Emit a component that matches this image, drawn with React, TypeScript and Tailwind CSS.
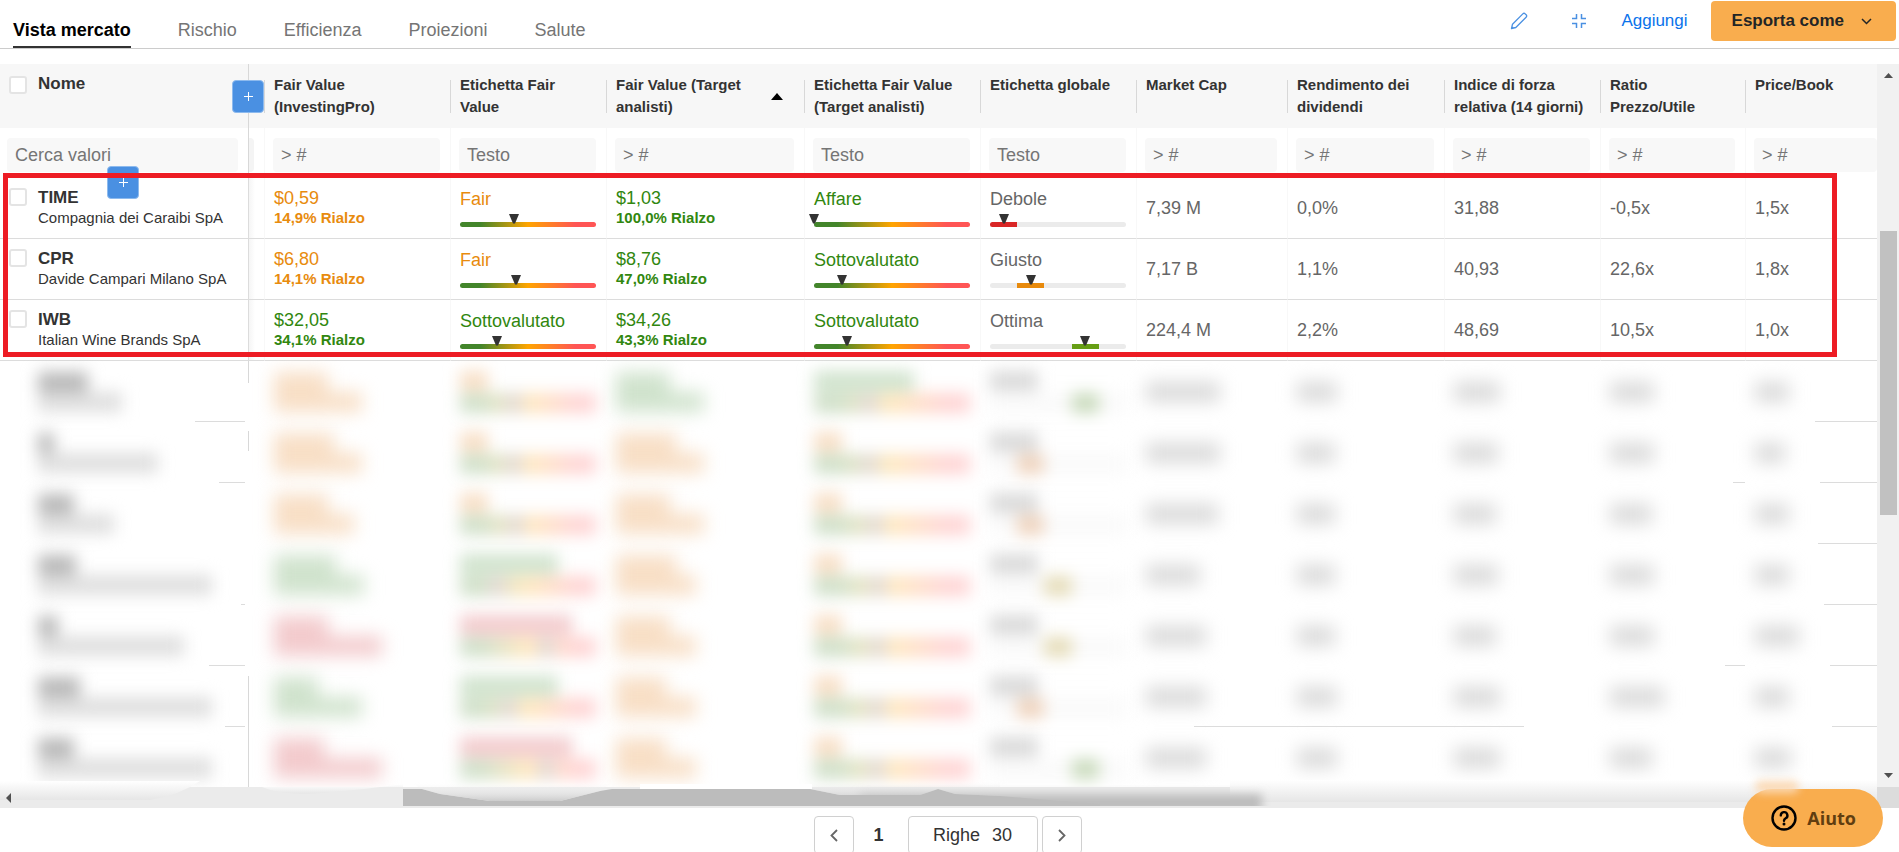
import React from 'react'

type Tone = 'orange' | 'green' | 'red' | 'gray'

interface Company {
  ticker: string
  name: string
  fairValue: [string, string, Tone]
  fairLabel: [string, Tone, number]
  target: [string, string, Tone]
  targetLabel: [string, Tone, number]
  health: [string, number]
  metrics: string[]
}

interface HiddenRow {
  name: [number, number]
  fairValue: [number, number, Tone]
  fairLabel: [number, Tone, number]
  target: [number, number, Tone]
  targetLabel: [number, Tone, number]
  health: number
  metrics: number[]
  nameRule: string
  metricRules: string[]
  edge: string
}

const TABS = ['Vista mercato', 'Rischio', 'Efficienza', 'Proiezioni', 'Salute']

const COLUMNS = [
  { title: 'Fair Value (InvestingPro)', placeholder: '> #', width: 'w-[186px]' },
  { title: 'Etichetta Fair Value', placeholder: 'Testo', width: 'w-[156px]' },
  { title: 'Fair Value (Target analisti)', placeholder: '> #', width: 'w-[198px]', sorted: true },
  { title: 'Etichetta Fair Value (Target analisti)', placeholder: 'Testo', width: 'w-[176px]' },
  { title: 'Etichetta globale', placeholder: 'Testo', width: 'w-[156px]' },
  { title: 'Market Cap', placeholder: '> #', width: 'w-[151px]' },
  { title: 'Rendimento dei dividendi', placeholder: '> #', width: 'w-[157px]' },
  { title: 'Indice di forza relativa (14 giorni)', placeholder: '> #', width: 'w-[156px]' },
  { title: 'Ratio Prezzo/Utile', placeholder: '> #', width: 'w-[145px]' },
  { title: 'Price/Book', placeholder: '> #', width: 'w-auto' },
]

const COMPANIES: Company[] = [
  {
    ticker: 'TIME',
    name: 'Compagnia dei Caraibi SpA',
    fairValue: ['$0,59', '14,9% Rialzo', 'orange'],
    fairLabel: ['Fair', 'orange', 40],
    target: ['$1,03', '100,0% Rialzo', 'green'],
    targetLabel: ['Affare', 'green', 0],
    health: ['Debole', 0],
    metrics: ['7,39 M', '0,0%', '31,88', '-0,5x', '1,5x'],
  },
  {
    ticker: 'CPR',
    name: 'Davide Campari Milano SpA',
    fairValue: ['$6,80', '14,1% Rialzo', 'orange'],
    fairLabel: ['Fair', 'orange', 41],
    target: ['$8,76', '47,0% Rialzo', 'green'],
    targetLabel: ['Sottovalutato', 'green', 18],
    health: ['Giusto', 1],
    metrics: ['7,17 B', '1,1%', '40,93', '22,6x', '1,8x'],
  },
  {
    ticker: 'IWB',
    name: 'Italian Wine Brands SpA',
    fairValue: ['$32,05', '34,1% Rialzo', 'green'],
    fairLabel: ['Sottovalutato', 'green', 27],
    target: ['$34,26', '43,3% Rialzo', 'green'],
    targetLabel: ['Sottovalutato', 'green', 21],
    health: ['Ottima', 3],
    metrics: ['224,4 M', '2,2%', '48,69', '10,5x', '1,0x'],
  },
]

const HIDDEN_ROWS: HiddenRow[] = [
  {
    name: [50, 84], fairValue: [54, 88, 'orange'], fairLabel: [28, 'orange', 40],
    target: [54, 88, 'green'], targetLabel: [100, 'green', 36], health: 3,
    metrics: [74, 40, 46, 44, 34], nameRule: 'w-[50px]',
    metricRules: ['', '', '', '', 'w-[62px]'], edge: 'top-0 h-[22px]',
  },
  {
    name: [16, 120], fairValue: [60, 88, 'orange'], fairLabel: [28, 'orange', 40],
    target: [60, 88, 'orange'], targetLabel: [28, 'orange', 36], health: 1,
    metrics: [74, 38, 44, 44, 30], nameRule: 'w-[26px]',
    metricRules: ['', '', '', 'w-3', 'w-[57px]'], edge: 'top-[9px] h-5',
  },
  {
    name: [36, 76], fairValue: [54, 80, 'orange'], fairLabel: [28, 'orange', 41],
    target: [54, 88, 'orange'], targetLabel: [28, 'orange', 40], health: 1,
    metrics: [72, 38, 42, 42, 34], nameRule: '',
    metricRules: ['', '', '', '', 'w-[59px]'], edge: '',
  },
  {
    name: [38, 174], fairValue: [62, 90, 'green'], fairLabel: [98, 'green', 27],
    target: [60, 80, 'orange'], targetLabel: [28, 'orange', 42], health: 2,
    metrics: [54, 38, 44, 44, 34], nameRule: 'w-1',
    metricRules: ['', '', '', '', 'w-[53px]'], edge: '',
  },
  {
    name: [20, 146], fairValue: [54, 108, 'red'], fairLabel: [112, 'red', 63],
    target: [54, 80, 'orange'], targetLabel: [28, 'orange', 42], health: 2,
    metrics: [60, 38, 42, 44, 44], nameRule: 'w-9',
    metricRules: ['', '', '', 'w-5', 'w-[47px]'], edge: '',
  },
  {
    name: [42, 174], fairValue: [44, 88, 'green'], fairLabel: [98, 'green', 36],
    target: [50, 80, 'orange'], targetLabel: [28, 'orange', 41], health: 1,
    metrics: [60, 40, 46, 54, 34], nameRule: 'w-5',
    metricRules: ['w-[93px]', 'w-full', 'w-20 right-[76px]', '', 'w-[45px]'], edge: 'bottom-0 h-[51px]',
  },
  {
    name: [36, 174], fairValue: [50, 108, 'red'], fairLabel: [112, 'red', 63],
    target: [50, 80, 'orange'], targetLabel: [28, 'orange', 41], health: 3,
    metrics: [60, 40, 46, 42, 36], nameRule: '',
    metricRules: ['', '', '', '', ''], edge: 'top-0 h-[61px]',
  },
]

const TEXT_TONES: Record<Tone, string> = {
  orange: 'text-[#e88b0e]',
  green: 'text-[#31870f]',
  red: 'text-[#d92626]',
  gray: 'text-[#666666]',
}

const SMUDGE_TONES: Record<Tone, string> = {
  orange: 'bg-[#f8dfc6]',
  green: 'bg-[#d0e3cd]',
  red: 'bg-[#f3cbcd]',
  gray: 'bg-[#dadada]',
}

const HEALTH_COLORS = ['bg-[#d92626]', 'bg-[#e88a0c]', 'bg-[#b9a52a]', 'bg-[#669e14]']

const HEALTH_SMUDGES = ['bg-[#f3cbcd]', 'bg-[#efd3bd]', 'bg-[#e5dcb8]', 'bg-[#c8dabb]']

const SCALE = 'bg-[linear-gradient(90deg,#43852b_15%,#ffa500_50%,#ff5555_85%)]'

const Marker = ({ at }: { at: number }) => (
  <svg
    className="absolute top-0 h-[10px] w-[10px] -translate-x-1/2"
    style={{ left: `${at}%` }}
    viewBox="0 0 10 10"
  >
    <path d="M0 0h10L6 9.500H4z" fill="#333" />
  </svg>
)

const Gauge = ({ at }: { at: number }) => (
  <div className="relative flex h-[13px] items-end">
    <div className={`h-[5px] w-full rounded-sm ${SCALE}`} />
    <Marker at={at} />
  </div>
)

const HealthGauge = ({ level }: { level: number }) => (
  <div className="relative flex h-[13px] items-end">
    <div className="h-[5px] w-full overflow-hidden rounded-sm bg-[#ebebeb]">
      <div className={`h-full w-1/5 ${HEALTH_COLORS[level]}`} style={{ marginLeft: `${level * 20}%` }} />
    </div>
    <Marker at={level * 20 + 10} />
  </div>
)

const Cell = ({ children }: { children: React.ReactNode }) => (
  <td className="h-[61px] border-b border-l border-b-[#dcdcdc] border-l-[#f8f8f8] py-0 pr-[10px] pl-[9px] align-middle">
    {children}
  </td>
)

const PriceCell = ({ value }: { value: [string, string, Tone] }) => (
  <Cell>
    <div className={TEXT_TONES[value[2]]}>
      <div className="leading-5">{value[0]}</div>
      <div className="text-[15px] leading-5 font-bold">{value[1]}</div>
    </div>
  </Cell>
)

const LabelCell = ({ label, tone, children }: { label: string; tone: Tone; children: React.ReactNode }) => (
  <Cell>
    <div className={`mb-[5px] leading-5 ${TEXT_TONES[tone]}`}>{label}</div>
    {children}
  </Cell>
)

const Smudge = ({ width, color }: { width: number; color: string }) => (
  <div className={`h-5 ${color}`} style={{ width }} />
)

const HiddenPrice = ({ value }: { value: [number, number, Tone] }) => (
  <td className="px-[10px] py-0">
    <div className="blur-[9px]">
      <Smudge width={value[0]} color={SMUDGE_TONES[value[2]]} />
      <Smudge width={value[1]} color={SMUDGE_TONES[value[2]]} />
    </div>
  </td>
)

const HiddenLabel = ({ value }: { value: [number, Tone, number] }) => (
  <td className="px-[10px] py-0">
    <div className="flex flex-col gap-[2px] blur-[8px]">
      <Smudge width={value[0]} color={SMUDGE_TONES[value[1]]} />
      <div className={`h-5 opacity-25 ${SCALE}`}>
        <div className="h-full w-4 bg-[#8a6a50]" style={{ marginLeft: `${value[2] - 6}%` }} />
      </div>
    </div>
  </td>
)

const AddButton = () => (
  <button
    aria-label="Aggiungi"
    className="flex h-[33px] w-8 items-center justify-center rounded-sm border border-[#8dbaee] bg-[#4a90e2]"
  >
    <svg className="h-[9px] w-[9px]" viewBox="0 0 9 9" stroke="#fff">
      <path d="M4.500 0v9M0 4.500h9" />
    </svg>
  </button>
)

const Checkbox = ({ label }: { label: string }) => (
  <input
    type="checkbox"
    aria-label={label}
    className="h-[18px] w-[18px] shrink-0 appearance-none rounded-[3px] border-2 border-[#e4e4e4] bg-white"
  />
)

const Toolbar = () => (
  <header className="flex h-[49px] items-end justify-between border-b border-[#cccccc]">
    <nav className="flex gap-[47px] pl-[13px]">
      {TABS.map((tab, index) => (
        <a
          key={tab}
          href="#"
          className={`border-b-2 pb-[6px] leading-5 ${
            index === 0 ? 'border-[#333333] font-bold text-black' : 'border-transparent text-[#757575]'
          }`}
        >
          {tab}
        </a>
      ))}
    </nav>
    <div className="mb-[7px] flex items-center pr-[3px] text-[17px]">
      <button aria-label="Modifica" className="mr-[43px]">
        <svg className="h-[18px] w-[18px]" viewBox="0 0 18 18" fill="none" stroke="#4a90e2" strokeWidth="1.300">
          <path
            d="M1.500 16.500l1-4.300L12.800 1.900a1.700 1.700 0 0 1 2.400 0l.9.9a1.700 1.700 0 0 1 0 2.400L5.800 15.500zM1.900 14.500l1.600 1.600"
            strokeLinejoin="round"
          />
        </svg>
      </button>
      <button aria-label="Comprimi" className="mr-[34px]">
        <svg className="h-4 w-4" viewBox="0 0 16 16" fill="none" stroke="#4a90e2" strokeWidth="1.500">
          <path d="M5.500 1v4.500H1M10.500 1v4.500H15M5.500 15v-4.500H1M10.500 15v-4.500H15" />
        </svg>
      </button>
      <button className="mr-[23px] text-[#0a73eb]">Aggiungi</button>
      <button className="flex h-10 items-center gap-[17px] rounded-sm bg-[#f9ad4e] pr-6 pl-[21px] font-bold text-[#232526]">
        Esporta come
        <svg className="h-[7px] w-[11px]" viewBox="0 0 11 7" fill="none" stroke="#232526" strokeWidth="1.500">
          <path d="M1 1l4.500 4.500L10 1" />
        </svg>
      </button>
    </div>
  </header>
)

const TableHead = () => (
  <thead>
    <tr className="h-16 bg-[#f7f7f7] text-left">
      <th className="relative border-r border-[#d8d8d8] p-0">
        <div className="flex h-10 items-start gap-[11px] pl-[9px]">
          <Checkbox label="Seleziona tutto" />
          <span className="text-[17px] leading-4">Nome</span>
        </div>
        <div className="absolute top-4 -right-4 z-10">
          <AddButton />
        </div>
      </th>
      <th className="p-0" />
      {COLUMNS.map((column) => (
        <th key={column.title} className="p-0">
          <div className="flex items-center">
            <span className="h-[33px] w-px bg-[#d8d8d8]" />
            <div className="h-11 flex-1 pr-3 pl-[9px] text-[15px] leading-[22px]">{column.title}</div>
            {column.sorted && (
              <svg className="mr-[21px] h-[7px] w-3" viewBox="0 0 12 7">
                <path d="M0 7l6-7 6 7z" />
              </svg>
            )}
          </div>
        </th>
      ))}
    </tr>
    <tr className="h-[50px] align-bottom">
      <td className="relative border-r border-[#d8d8d8] pt-0 pr-[10px] pb-[6px] pl-[7px]">
        <input
          aria-label="Cerca valori"
          placeholder="Cerca valori"
          className="block h-[34px] w-full rounded bg-[#f8f8f8] px-2 placeholder:text-[#757575]"
        />
        <div className="absolute top-[38px] left-[107px] z-10">
          <AddButton />
        </div>
      </td>
      <td className="px-0 pt-0 pb-[6px]">
        <div className="h-[34px] w-[5px] rounded-r bg-[#f4f4f4]" />
      </td>
      {COLUMNS.map((column, index) => (
        <td
          key={column.title}
          className={`border-l border-[#f8f8f8] pt-0 pb-[6px] pl-2 ${
            index === COLUMNS.length - 1 ? 'pr-0' : 'pr-[10px]'
          }`}
        >
          <input
            aria-label={column.title}
            placeholder={column.placeholder}
            className="block h-[34px] w-full rounded bg-[#f8f8f8] px-2 placeholder:text-[#757575]"
          />
        </td>
      ))}
    </tr>
  </thead>
)

const CompanyRow = ({ company }: { company: Company }) => (
  <tr>
    <td className="h-[61px] border-r border-b border-[#dcdcdc] p-0">
      <div className="flex gap-[11px] pl-[9px]">
        <Checkbox label={company.ticker} />
        <div className="text-[#333333]">
          <div className="text-[17px] leading-5 font-bold">{company.ticker}</div>
          <div className="text-[15px] leading-5">{company.name}</div>
        </div>
      </div>
    </td>
    <td className="border-b border-[#dcdcdc] bg-linear-to-r from-[#f5f5f5] to-white to-40% p-0" />
    <PriceCell value={company.fairValue} />
    <LabelCell label={company.fairLabel[0]} tone={company.fairLabel[1]}>
      <Gauge at={company.fairLabel[2]} />
    </LabelCell>
    <PriceCell value={company.target} />
    <LabelCell label={company.targetLabel[0]} tone={company.targetLabel[1]}>
      <Gauge at={company.targetLabel[2]} />
    </LabelCell>
    <LabelCell label={company.health[0]} tone="gray">
      <HealthGauge level={company.health[1]} />
    </LabelCell>
    {company.metrics.map((metric, index) => (
      <Cell key={index}>
        <span className="text-[#666666]">{metric}</span>
      </Cell>
    ))}
  </tr>
)

const ObscuredRow = ({ row }: { row: HiddenRow }) => (
  <tr aria-hidden="true">
    <td className="relative h-[61px] py-0 pl-[38px]">
      <div className="blur-[8px]">
        <Smudge width={row.name[0]} color="bg-[#b8b8b8]" />
        <Smudge width={row.name[1]} color="bg-[#dfdfdf]" />
      </div>
      {row.edge && <span className={`absolute right-0 w-px bg-[#d8d8d8] ${row.edge}`} />}
      {row.nameRule && <span className={`absolute right-1 bottom-0 h-px bg-[#dcdcdc] ${row.nameRule}`} />}
    </td>
    <td className="p-0" />
    <HiddenPrice value={row.fairValue} />
    <HiddenLabel value={row.fairLabel} />
    <HiddenPrice value={row.target} />
    <HiddenLabel value={row.targetLabel} />
    <td className="px-[10px] py-0">
      <div className="flex flex-col gap-[2px] blur-[8px]">
        <Smudge width={48} color={SMUDGE_TONES.gray} />
        <div className="h-5 bg-[#fafafa]">
          <div
            className={`h-full w-1/5 ${HEALTH_SMUDGES[row.health]}`}
            style={{ marginLeft: `${row.health * 20}%` }}
          />
        </div>
      </div>
    </td>
    {row.metrics.map((width, index) => (
      <td key={index} className="relative px-[10px] py-0">
        <div className="blur-[9px]">
          <Smudge width={width} color={SMUDGE_TONES.gray} />
        </div>
        {row.metricRules[index] && (
          <span className={`absolute right-0 bottom-0 h-px bg-[#dcdcdc] ${row.metricRules[index]}`} />
        )}
      </td>
    ))}
  </tr>
)

const VerticalScrollbar = () => (
  <div className="flex w-[22px] shrink-0 flex-col items-center bg-[#f1f1f1] py-[9px]">
    <svg className="h-[5px] w-[9px]" viewBox="0 0 9 5">
      <path d="M0 5l4.500-5L9 5z" fill="#505050" />
    </svg>
    <div className="mt-[153px] h-[284px] w-[17px] bg-[#c1c1c1]" />
    <svg className="mt-auto h-[5px] w-[9px]" viewBox="0 0 9 5">
      <path d="M0 0l4.500 5L9 0z" fill="#505050" />
    </svg>
  </div>
)

const HorizontalScrollbar = () => (
  <div className="relative flex h-[21px] shrink-0 bg-[#ebebeb]">
    <svg className="absolute bottom-0 left-0 h-[36px] w-full" viewBox="0 0 1899 36" preserveAspectRatio="none">
      <defs>
        <linearGradient id="haze" x1="0" y1="0" x2="0" y2="1">
          <stop offset="0" stopColor="#fff" stopOpacity="0" />
          <stop offset="1" stopColor="#cccccc" />
        </linearGradient>
        <linearGradient id="trackHaze" x1="0" y1="0" x2="0" y2="1">
          <stop offset="0" stopColor="#fff" />
          <stop offset="1" stopColor="#e6e6e6" />
        </linearGradient>
        <filter id="soften" x="-10%" y="-100%" width="120%" height="300%">
          <feGaussianBlur stdDeviation="5" />
        </filter>
      </defs>
      <path d="M0 9H200q-20 14-50 19H0z" fill="url(#trackHaze)" />
      <path d="M262 15q20 9 60 6t81-9v3z" fill="url(#trackHaze)" />
      <path d="M1230 8H1877V30H1230z" fill="url(#trackHaze)" />
      <path d="M860 22H1262V40H860z" fill="#bcbcbc" filter="url(#soften)" />
      <path d="M403 17h19l18 5 50 7h70l40-10 12-2h198l30 6h80l18-6 17 5 45 2 60 5 40 3v2H403z" fill="#bcbcbc" />
      <path d="M410 10H612l-12 9-40 10h-70l-50-7-18-5z" fill="url(#haze)" />
      <path d="M810 8H1000V24l-45-2-17-5-18 6h-80l-30-6z" fill="url(#haze)" opacity="0.600" />
      <path d="M640 12H812V17H640z" fill="#fff" />
      <path d="M403 34H1290V36H403z" fill="#ebebeb" />
      <path d="M1877 15h22v21h-22z" fill="#dcdcdc" />
      <path d="M11 21v10l-5-5z" fill="#505050" />
    </svg>
  </div>
)

const Pagination = () => (
  <footer className="flex h-11 shrink-0 items-start justify-center pt-2 pr-1 text-[#333333]">
    <button
      aria-label="Pagina precedente"
      className="flex h-[38px] w-10 items-center justify-center rounded-sm border border-[#d0d0d0]"
    >
      <svg className="h-[13px] w-2" viewBox="0 0 8 13" fill="none" stroke="#666" strokeWidth="1.800">
        <path d="M7 1L1.500 6.500 7 12" />
      </svg>
    </button>
    <span className="w-[54px] pr-1 text-center leading-[38px] font-bold">1</span>
    <button className="flex h-[38px] w-[130px] items-center justify-center gap-3 rounded-sm border border-[#d0d0d0]">
      <span>Righe</span>
      <span>30</span>
    </button>
    <button
      aria-label="Pagina successiva"
      className="ml-1 flex h-[38px] w-10 items-center justify-center rounded-sm border border-[#d0d0d0]"
    >
      <svg className="h-[13px] w-2" viewBox="0 0 8 13" fill="none" stroke="#666" strokeWidth="1.800">
        <path d="M1 1l5.500 5.500L1 12" />
      </svg>
    </button>
  </footer>
)

const HelpButton = () => (
  <button className="fixed right-4 bottom-[5px] z-20 flex h-[58px] items-center gap-[10px] rounded-full bg-[#f9ad4e] pr-[27px] pl-7 font-['Open_Sans',sans-serif] text-lg font-bold text-[#613e10]">
    <span className="absolute -top-2 left-3 h-3 w-11 rounded-full bg-[#fbd9b4] blur-[4px]" />
    <svg className="h-[26px] w-[26px]" viewBox="0 0 26 26" fill="none" stroke="#000" strokeWidth="2.400">
      <circle cx="13" cy="13" r="11.500" />
      <path
        d="M9.800 10.400a3.300 3.300 0 1 1 4.900 2.900c-1.100.6-1.700 1.200-1.700 2.500"
        strokeLinecap="round"
      />
      <circle cx="13" cy="19" r="1.500" fill="#000" stroke="none" />
    </svg>
    Aiuto
  </button>
)

export default function App() {
  return (
    <div className="flex h-screen flex-col overflow-hidden bg-white font-['Liberation_Sans',Arial,sans-serif] text-lg text-[#333333]">
      <Toolbar />
      <main className="mt-[15px] flex min-h-0 flex-1">
        <div className="relative min-w-0 flex-1 overflow-hidden">
          <table className="w-full table-fixed border-separate border-spacing-0">
            <colgroup>
              <col className="w-[249px]" />
              <col className="w-[15px]" />
              {COLUMNS.map((column) => (
                <col key={column.title} className={column.width} />
              ))}
            </colgroup>
            <TableHead />
            <tbody>
              {COMPANIES.map((company) => (
                <CompanyRow key={company.ticker} company={company} />
              ))}
              {HIDDEN_ROWS.map((row, index) => (
                <ObscuredRow key={index} row={row} />
              ))}
            </tbody>
          </table>
          {/* Highlight around the first three companies */}
          <div className="pointer-events-none absolute top-[109px] right-10 left-[3px] z-10 h-[184px] border-5 border-[#ed1c24]" />
        </div>
        <VerticalScrollbar />
      </main>
      <HorizontalScrollbar />
      <Pagination />
      <HelpButton />
    </div>
  )
}
